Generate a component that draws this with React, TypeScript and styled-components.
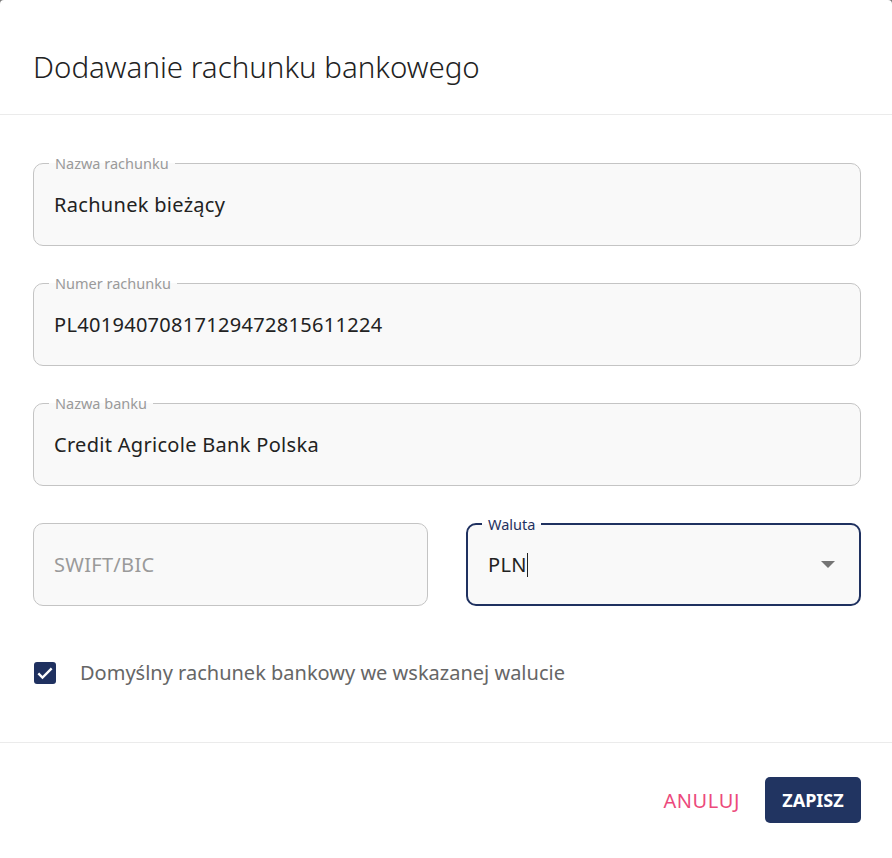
import React from "react";
import styled, { createGlobalStyle } from "styled-components";

const GlobalStyle = createGlobalStyle`
  html, body {
    margin: 0;
    padding: 0;
    background: #7a7a7a;
  }
  * {
    box-sizing: border-box;
  }
`;

const Dialog = styled.div`
  width: 892px;
  height: 858px;
  background: #fff;
  border-radius: 4px 4px 0 0;
  display: flex;
  flex-direction: column;
  font-family: "Noto Sans", "Open Sans", sans-serif;
  overflow: hidden;
`;

const Header = styled.div`
  height: 115px;
  padding: 0 33px;
  display: flex;
  align-items: center;
  border-bottom: 1px solid #ebebeb;
`;

const Title = styled.h2`
  margin: 0;
  padding-top: 18px;
  font-size: 29.5px;
  font-weight: 300;
  color: #222;
`;

const Body = styled.div`
  padding: 48px 31px 0 33px;
  display: flex;
  flex-direction: column;
  gap: 37px;
  height: 628px;
  border-bottom: 1px solid #ebebeb;
`;

const Row = styled.div`
  display: grid;
  grid-template-columns: 1fr 1fr;
  gap: 38px;
`;

const Field = styled.div<{ $focused?: boolean }>`
  position: relative;
  height: 83px;
  padding: 0 20px;
  border-radius: 10px;
  border: ${(p) => (p.$focused ? "2px solid #1f3160" : "1px solid #c4c4c4")};
  background: #f9f9f9;
  display: flex;
  align-items: center;
  min-width: 0;
`;

const Label = styled.span<{ $focused?: boolean }>`
  position: absolute;
  top: -9px;
  left: ${(p) => (p.$focused ? "14px" : "15px")};
  padding: 0 6px;
  font-size: 14.5px;
  line-height: 16px;
  color: ${(p) => (p.$focused ? "#1f3160" : "#9a9a9a")};
  background: linear-gradient(#fff 50%, #f9f9f9 50%);
`;

const Value = styled.div<{ $placeholder?: boolean }>`
  flex: 1;
  font-size: 20px;
  letter-spacing: 0.3px;
  color: ${(p) => (p.$placeholder ? "#9a9a9a" : "#222")};
  white-space: nowrap;
`;

const Caret = styled.span`
  display: inline-block;
  width: 1px;
  height: 24px;
  background: #222;
  vertical-align: -5px;
`;

const Arrow = styled.span`
  margin-right: 4px;
  width: 0;
  height: 0;
  border-left: 7px solid transparent;
  border-right: 7px solid transparent;
  border-top: 7px solid #757575;
`;

const CheckRow = styled.label`
  margin-top: 16px;
  display: flex;
  align-items: center;
  gap: 24px;
  font-size: 20px;
  color: #666;
`;

const Box = styled.span`
  width: 22px;
  height: 22px;
  margin-left: 1px;
  border-radius: 3px;
  background: #1f3160;
  display: flex;
  align-items: center;
  justify-content: center;
`;

const Footer = styled.div`
  display: flex;
  justify-content: flex-end;
  align-items: center;
  gap: 25px;
  padding: 34px 31px 0 0;
`;

const CancelButton = styled.button`
  border: none;
  background: transparent;
  font-family: inherit;
  font-size: 20px;
  letter-spacing: 0.6px;
  color: #ec4a7c;
  padding: 0;
  cursor: pointer;
`;

const SaveButton = styled.button`
  border: none;
  background: #213461;
  color: #fff;
  font-family: inherit;
  font-weight: 700;
  font-size: 18px;
  width: 96px;
  height: 46px;
  border-radius: 5px;
  cursor: pointer;
`;

export default function App() {
  return (
    <>
      <GlobalStyle />
      <Dialog>
        <Header>
          <Title>Dodawanie rachunku bankowego</Title>
        </Header>
        <Body>
          <Field>
            <Label>Nazwa rachunku</Label>
            <Value>Rachunek bieżący</Value>
          </Field>
          <Field>
            <Label>Numer rachunku</Label>
            <Value>PL40194070817129472815611224</Value>
          </Field>
          <Field>
            <Label>Nazwa banku</Label>
            <Value>Credit Agricole Bank Polska</Value>
          </Field>
          <Row>
            <Field>
              <Value $placeholder>SWIFT/BIC</Value>
            </Field>
            <Field $focused>
              <Label $focused>Waluta</Label>
              <Value>
                PLN
                <Caret />
              </Value>
              <Arrow />
            </Field>
          </Row>
          <CheckRow>
            <Box>
              <svg width="20" height="20" viewBox="0 0 24 24">
                <path
                  d="M4 12.5l5 5L20 6.5"
                  fill="none"
                  stroke="#fff"
                  strokeWidth="2.8"
                />
              </svg>
            </Box>
            Domyślny rachunek bankowy we wskazanej walucie
          </CheckRow>
        </Body>
        <Footer>
          <CancelButton>ANULUJ</CancelButton>
          <SaveButton>ZAPISZ</SaveButton>
        </Footer>
      </Dialog>
    </>
  );
}
